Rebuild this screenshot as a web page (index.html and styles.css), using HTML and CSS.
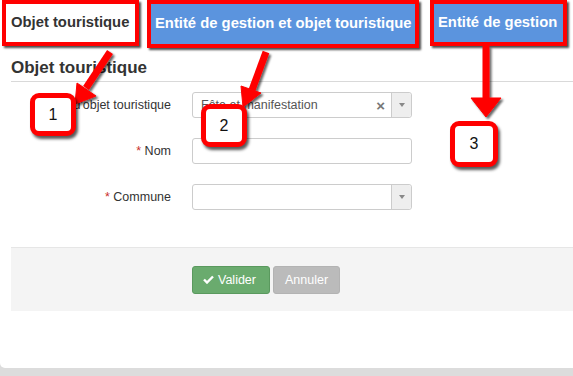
FILE: index.html
```html
<!DOCTYPE html>
<html lang="fr">
<head>
<meta charset="utf-8">
<link rel="stylesheet" href="styles.css">
</head>
<body>
<div class="page">
  <div class="tabs">
    <div class="tab tab-white">Objet touristique</div>
    <div class="tab tab-blue tab-2">Entité de gestion et objet touristique</div>
    <div class="tab tab-blue tab-3">Entité de gestion</div>
  </div>
  <div class="panel">
    <h2 class="title">Objet touristique</h2>
    <div class="form">
      <div class="row">
        <label class="lbl">Type d'objet touristique</label>
        <div class="field select">
          <span class="val">Fête et manifestation</span>
          <span class="clear">×</span>
          <span class="caret"><i></i></span>
        </div>
      </div>
      <div class="row">
        <label class="lbl"><span class="req">*</span> Nom</label>
        <div class="field"></div>
      </div>
      <div class="row">
        <label class="lbl"><span class="req">*</span> Commune</label>
        <div class="field select">
          <span class="val"></span>
          <span class="caret"><i></i></span>
        </div>
      </div>
    </div>
    <div class="footer">
      <button class="btn btn-ok"><svg width="11" height="9" viewBox="0 0 11 9"><path d="M1 4.5 L4 7.5 L10 1.5" fill="none" stroke="#fff" stroke-width="2.4"/></svg>Valider</button>
      <button class="btn btn-cancel">Annuler</button>
    </div>
  </div>

  <svg class="overlay" width="573" height="376" viewBox="0 0 573 376">
    <defs>
      <filter id="sh" x="-20%" y="-20%" width="150%" height="150%">
        <feDropShadow dx="2" dy="2" stdDeviation="1.2" flood-color="#000" flood-opacity="0.6"/>
      </filter>
    </defs>
    <g filter="url(#sh)" fill="#f00" stroke="#f00">
      <line x1="110" y1="52" x2="86" y2="88" stroke-width="7"/>
      <polygon points="75,104 77,83 96,96" stroke-width="1" stroke-linejoin="round"/>
      <line x1="266" y1="52" x2="252" y2="90" stroke-width="7"/>
      <polygon points="243,107 241,86 261,93" stroke-width="1" stroke-linejoin="round"/>
      <line x1="486" y1="46" x2="486" y2="100" stroke-width="7"/>
      <polygon points="486,117 471,98 501,98" stroke-width="1" stroke-linejoin="round"/>
    </g>
  </svg>
  <div class="badge b1">1</div>
  <div class="badge b2">2</div>
  <div class="badge b3">3</div>
</div>
</body>
</html>
```
FILE: styles.css
```css
html, body {
  margin: 0;
  padding: 0;
  background: #dcdcdc;
}
body {
  font-family: "Liberation Sans", Arial, sans-serif;
  width: 573px;
  height: 376px;
  overflow: hidden;
}
.page {
  position: relative;
  background: #fff;
  height: 368px;
  width: 600px;
  border-bottom-left-radius: 5px;
}
.tabs {
  display: flex;
  height: 47px;
  padding-left: 2px;
}
.tab {
  box-sizing: border-box;
  height: 46px;
  border: 4px solid #f00;
  font-weight: bold;
  font-size: 14.8px;
  white-space: nowrap;
  display: flex;
  align-items: center;
  padding: 0 0 2px 5px;
  box-shadow: 2px 2px 2px rgba(0,0,0,0.7);
}
.tab-white {
  width: 137px;
  background: #fff;
  color: #333;
}
.tab-blue {
  background: #5b94de;
  color: #fff;
}
.tab-2 {
  margin-left: 8px;
  width: 272px;
  height: 48px;
  padding-left: 4px;
}
.tab-3 {
  margin-left: 11px;
  width: 137px;
  padding-left: 4px;
}
.panel {
  margin-left: 11px;
}
.title {
  margin: 11px 0 0 0;
  padding-bottom: 3px;
  font-size: 17px;
  line-height: 20px;
  color: #333;
  border-bottom: 1px solid #d9d9d9;
}
.form {
  padding-top: 10px;
}
.row {
  display: flex;
  align-items: center;
  height: 26px;
  margin-bottom: 20px;
}
.lbl {
  width: 160px;
  text-align: right;
  font-size: 12.5px;
  color: #333;
  padding-right: 21px;
  white-space: nowrap;
}
.req {
  color: #c9302c;
}
.field {
  box-sizing: border-box;
  width: 220px;
  height: 26px;
  border: 1px solid #ccc;
  border-radius: 3px;
  background: #fff;
  display: flex;
  align-items: center;
}
.select .val {
  flex: 1;
  padding-left: 8px;
  font-size: 12.5px;
  color: #555;
}
.clear {
  font-size: 15px;
  font-weight: bold;
  color: #777;
  padding-right: 6px;
}
.caret {
  width: 19px;
  height: 100%;
  border-left: 1px solid #ccc;
  background: #eee;
  display: flex;
  align-items: center;
  justify-content: center;
  border-radius: 0 3px 3px 0;
}
.caret i {
  width: 0;
  height: 0;
  border-left: 3px solid transparent;
  border-right: 3px solid transparent;
  border-top: 4px solid #888;
}
.footer {
  margin-top: 37px;
  height: 63px;
  background: #f4f4f4;
  border-top: 1px solid #e6e6e6;
  display: flex;
  align-items: center;
  padding-left: 181px;
  gap: 3px;
}
.btn {
  height: 28px;
  border-radius: 3px;
  font-family: "Liberation Sans", Arial, sans-serif;
  font-size: 12.5px;
  color: #fff;
  display: flex;
  align-items: center;
  gap: 4px;
  padding: 0 10px;
  cursor: pointer;
}
.btn-ok {
  background: #6aab6e;
  border: 1px solid #5a995e;
  width: 78px;
}
.btn-cancel {
  background: #bbb;
  border: 1px solid #b3b3b3;
  width: 67px;
  justify-content: center;
}
.overlay {
  position: absolute;
  left: 0;
  top: 0;
  pointer-events: none;
}
.badge {
  position: absolute;
  box-sizing: border-box;
  width: 46px;
  height: 43px;
  border: 5px solid #f00;
  border-radius: 9px;
  background: #fff;
  color: #111;
  font-size: 16px;
  font-family: "Liberation Sans", Arial, sans-serif;
  display: flex;
  align-items: center;
  justify-content: center;
  box-shadow: 2px 3px 3px rgba(0,0,0,0.65);
}
.b1 { left: 30px; top: 93px; }
.b2 { left: 201px; top: 104px; }
.b3 { left: 450px; top: 121px; width: 48px; height: 46px; }
```
